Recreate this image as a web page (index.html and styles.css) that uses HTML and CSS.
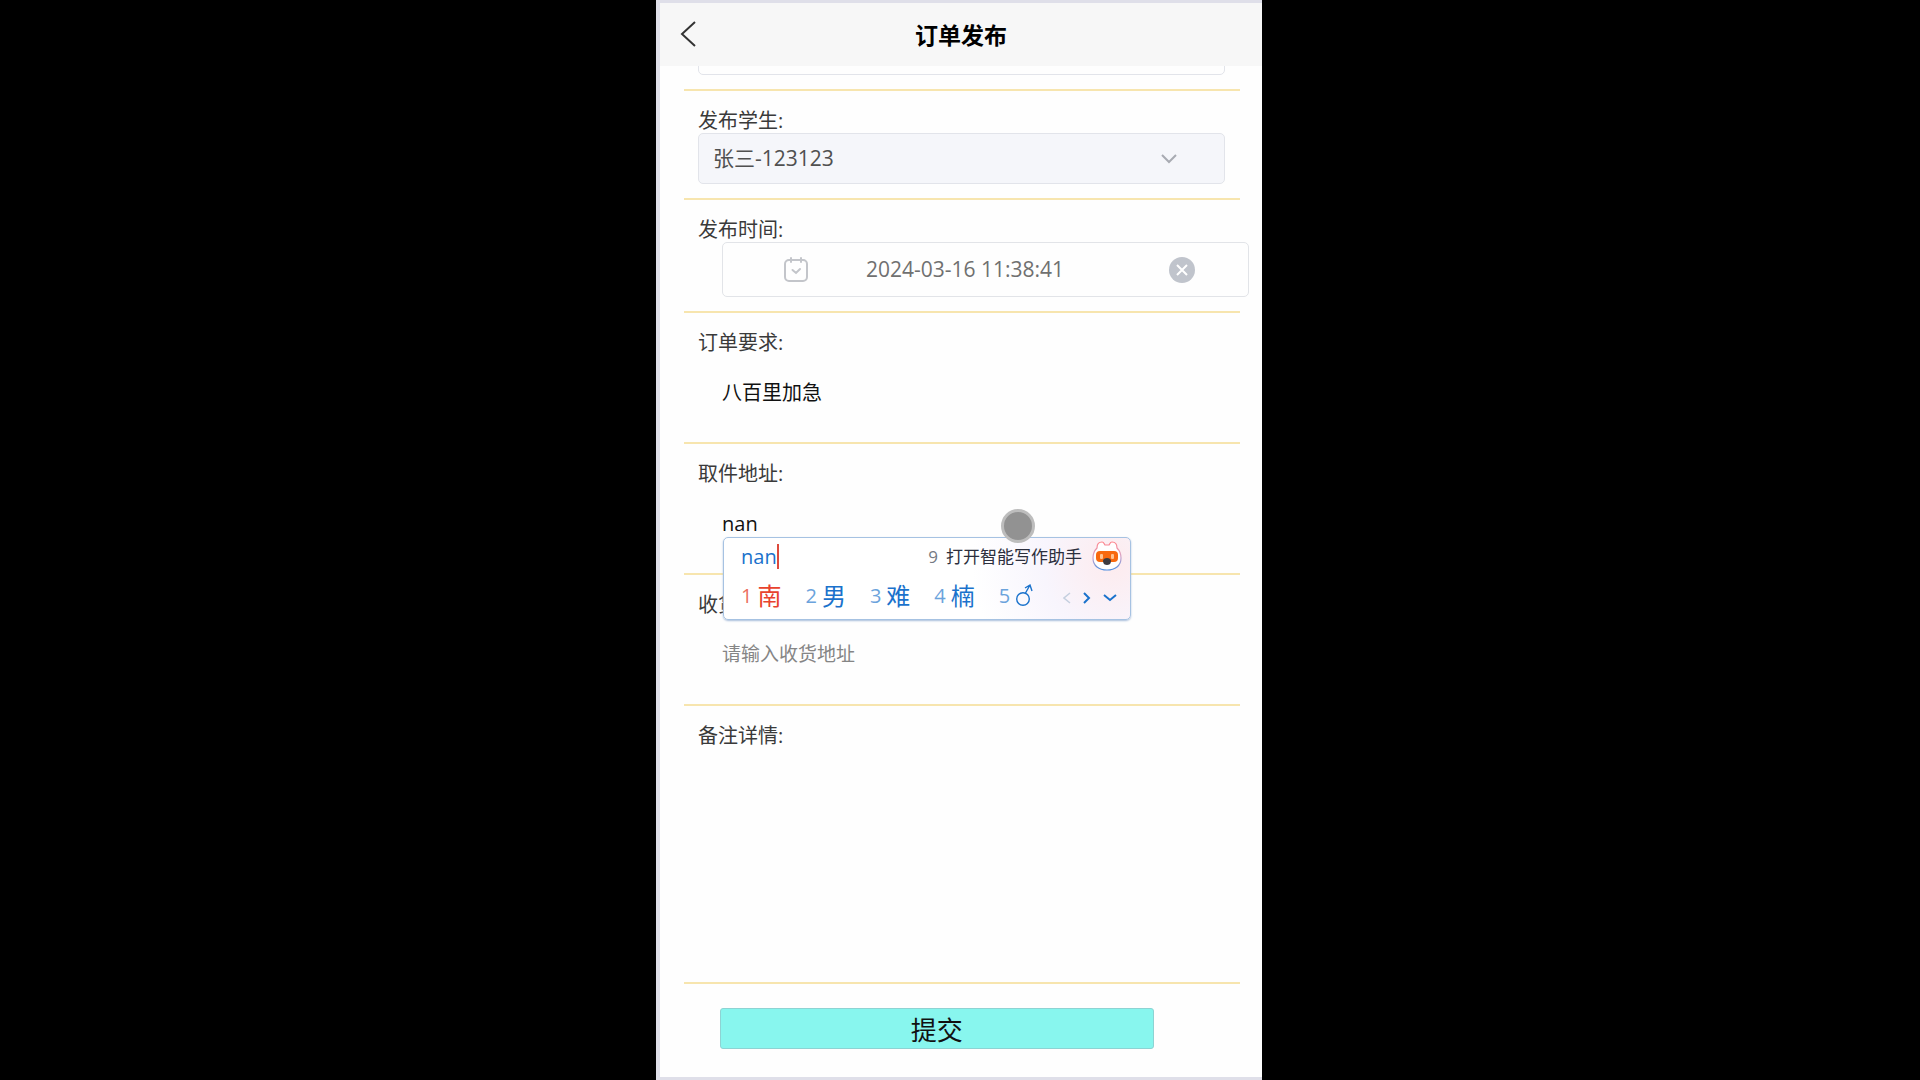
FILE: index.html
```html
<!DOCTYPE html>
<html lang="zh-CN">
<head>
<meta charset="utf-8">
<meta name="viewport" content="width=device-width, initial-scale=1">
<title>订单发布</title>
<link rel="stylesheet" href="styles.css">
</head>
<body>
<main class="phone">
  <header class="bar">
    <button class="back" type="button" aria-label="返回">
      <svg width="16" height="26" viewBox="0 0 16 26" fill="none" stroke="currentColor" stroke-width="2"><path d="M15 1 2 13l13 12"/></svg>
    </button>
    <h1 class="title">订单发布</h1>
  </header>
  <form class="form">
    <div class="row row-cut">
      <input class="box" type="text" aria-label="订单信息">
    </div>
    <div class="row">
      <label class="label" for="student">发布学生:</label>
      <div class="picker">
        <select class="box select" id="student"><option>张三-123123</option></select>
        <svg class="chevron" width="16" height="10" viewBox="0 0 16 10" fill="none" stroke="currentColor" stroke-width="2"><path d="m1 1 7 7 7-7"/></svg>
      </div>
    </div>
    <div class="row">
      <label class="label" for="time">发布时间:</label>
      <div class="date">
        <svg class="calendar" width="26" height="26" viewBox="0 0 26 26" fill="none" stroke="currentColor" stroke-width="2" stroke-linecap="round"><rect x="2" y="3" width="22" height="21" rx="4"/><path d="M8 1v4M18 1v4M9.500 13l3.500 3 4-4"/></svg>
        <input class="date-input" id="time" type="text" value="2024-03-16 11:38:41">
        <button class="clear" type="button" aria-label="清除">
          <svg width="28" height="28" viewBox="0 0 28 28"><circle cx="14" cy="14" r="13" fill="#c0c4cc"/><path d="m9 9 10 10M19 9 9 19" stroke="#fff" stroke-width="2"/></svg>
        </button>
      </div>
    </div>
    <div class="row">
      <label class="label" for="demand">订单要求:</label>
      <textarea class="area" id="demand">八百里加急</textarea>
    </div>
    <div class="row row-active">
      <label class="label" for="pickup">取件地址:</label>
      <textarea class="area" id="pickup">nan</textarea>
      <section class="ime" aria-label="输入法">
        <div class="ime-top">
          <span class="ime-code">nan</span>
          <span class="ime-tip"><span class="ime-nine">9</span>打开智能写作助手</span>
          <svg class="mascot" width="30" height="32" viewBox="0 0 30 32">
            <defs><linearGradient id="ring" x1="0" y1="0" x2="0" y2="1"><stop offset="0" stop-color="#ff7f86"/><stop offset=".5" stop-color="#d8a5c8"/><stop offset="1" stop-color="#4f8fe0"/></linearGradient></defs>
            <path d="M5 8C5 4 7 2 10 2c2 0 2 2 3 3h4c1-1 1-3 3-3 3 0 5 2 5 6 3 3 4 6 4 10 0 8-6 12-14 12S1 26 1 18c0-4 1-7 4-10Z" fill="#fff" stroke="url(#ring)" stroke-width="1.2"/>
            <rect x="4" y="11" width="22" height="11" rx="4" fill="#f8690f"/>
            <rect x="8" y="14" width="3" height="5" rx="1" fill="#ffc18e"/><rect x="19" y="14" width="3" height="5" rx="1" fill="#ffc18e"/>
            <path d="M11 21c0-2 2-3 4-3s4 1 4 3c0 3-2 4-4 4s-4-1-4-4Z" fill="#3c3b40"/>
          </svg>
        </div>
        <div class="ime-bottom">
          <ol class="words">
            <li class="word word-first"><span class="num">1</span>南</li>
            <li class="word"><span class="num">2</span>男</li>
            <li class="word"><span class="num">3</span>难</li>
            <li class="word"><span class="num">4</span>楠</li>
            <li class="word"><span class="num">5</span><svg width="20" height="24" viewBox="0 0 20 24" fill="none" stroke="currentColor" stroke-width="1.4" role="img" aria-label="♂"><circle cx="8" cy="16" r="6.3"/><path d="M10.500 10 15 2M10 5l5-3 2 6"/></svg></li>
          </ol>
          <div class="pager">
            <svg class="off" width="8" height="12" viewBox="0 0 8 12" fill="none" stroke="currentColor" stroke-width="1.5"><path d="M7 1 1 6l6 5"/></svg>
            <svg width="8" height="12" viewBox="0 0 8 12" fill="none" stroke="currentColor" stroke-width="2"><path d="m1 1 5 5-5 5"/></svg>
            <svg width="14" height="8" viewBox="0 0 14 8" fill="none" stroke="currentColor" stroke-width="2"><path d="m1 1 6 5 6-5"/></svg>
          </div>
        </div>
      </section>
      <span class="touch"></span>
    </div>
    <div class="row">
      <label class="label" for="address">收货地址:</label>
      <textarea class="area" id="address" placeholder="请输入收货地址"></textarea>
    </div>
    <div class="row">
      <label class="label" for="note">备注详情:</label>
      <textarea class="area area-tall" id="note"></textarea>
    </div>
    <button class="submit" type="button">提交</button>
  </form>
</main>
</body>
</html>
```
FILE: styles.css
```css
* {
  box-sizing: border-box;
}

body {
  margin: 0;
  padding-right: 2px;
  background: #000;
  color: #3a3a3a;
  font: 20px/27px "Open Sans", "Noto Sans CJK SC", sans-serif;
}

button,
input,
select,
textarea {
  margin: 0;
  padding: 0;
  border: 0;
  background: none;
  color: inherit;
  font: inherit;
  outline: 0;
}

svg {
  display: block;
  flex: none;
}

.phone {
  display: flex;
  flex-direction: column;
  max-width: 606px;
  min-height: 100vh;
  margin: 0 auto;
  border: solid #dfdfe9;
  border-width: 3px 0 3px 4px;
  background: #fefefe;
}

.bar {
  display: grid;
  grid-template-columns: 60px 1fr 60px;
  align-items: center;
  height: 63px;
  background: #f7f7f7;
}

.back {
  padding: 0 0 2px 20px;
  color: #333;
}

.title {
  margin: 0;
  color: #000;
  font-size: 23px;
  line-height: 32px;
  font-weight: 700;
  text-align: center;
}

.form {
  padding: 0 22px 0 24px;
}

.row {
  position: relative;
  padding: 17px 15px 14px 14px;
  border-bottom: 2px solid #f7e5ae;
}

.row-cut {
  display: flex;
  align-items: flex-end;
  height: 25px;
  padding-top: 0;
  overflow: hidden;
}

.row-active {
  z-index: 1;
}

.label {
  display: block;
  line-height: 25px;
}

.box {
  display: block;
  width: 100%;
  height: 51px;
  padding: 0 14px;
  border: 1px solid #e2e4ea;
  border-radius: 5px;
  font-size: 21px;
}

.picker {
  display: grid;
  align-items: center;
}

.select {
  grid-area: 1 / 1;
  appearance: none;
  background: #f5f6fa;
  color: #505050;
}

.chevron {
  grid-area: 1 / 1;
  justify-self: end;
  margin-right: 48px;
  color: #a8abb2;
  pointer-events: none;
}

.date {
  display: flex;
  align-items: center;
  height: 55px;
  margin: 0 -24px 0 24px;
  padding: 0 52px 0 60px;
  border: 1px solid #e2e4e8;
  border-radius: 5px;
}

.calendar {
  color: #c3c5ca;
}

.date-input {
  flex: 1;
  min-width: 0;
  margin-left: 57px;
  color: #707070;
  font-size: 21px;
}

.area {
  display: block;
  width: 100%;
  height: 73px;
  padding: 24px 24px 0;
  color: #111;
  resize: none;
  overflow: hidden;
}

.area::placeholder {
  color: #858585;
  font-size: 19px;
}

.area-tall {
  height: 220px;
}

.ime {
  position: absolute;
  top: 93px;
  left: 39px;
  display: flex;
  flex-direction: column;
  gap: 4px;
  width: 408px;
  height: 83px;
  padding: 2px 8px 0 17px;
  border: 1px solid #a6c2e2;
  border-radius: 5px;
  background: radial-gradient(circle at 96% 30%, #fdebee, #f8f5fd 18%, #fff 36%);
  box-shadow: 0 1px 2px #a9bedb;
  color: #1a72cc;
}

.ime-top,
.ime-bottom {
  display: flex;
  align-items: center;
  justify-content: space-between;
  height: 32px;
}

.ime-code {
  margin-right: auto;
  border-right: 2px solid #dd4a3c;
  line-height: 25px;
}

.ime-tip {
  margin-right: 10px;
  color: #2c2f3d;
  font-size: 17px;
}

.ime-nine {
  margin-right: 8px;
  color: #747a84;
}

.ime-bottom {
  height: 38px;
}

.words {
  display: flex;
  gap: 24px;
  margin: 0;
  padding: 0;
  list-style: none;
}

.word {
  display: flex;
  align-items: center;
  gap: 5px;
  font-size: 24px;
}

.num {
  color: #6ba3dc;
  font-size: 20px;
}

.word-first {
  color: #e8432e;
}

.word-first .num {
  color: #ec6f5f;
}

.pager {
  display: flex;
  align-items: center;
  gap: 12px;
  padding: 6px 5px 0 0;
}

.off {
  color: #c5cfdf;
}

.touch {
  position: absolute;
  top: 65px;
  left: 317px;
  width: 34px;
  height: 34px;
  border: 3px solid #bdbdbd;
  border-radius: 50%;
  background: #929292;
}

.submit {
  display: block;
  width: 78%;
  height: 41px;
  margin: 24px 0 28px 36px;
  padding-top: 3px;
  border: 1px solid #8ed3d3;
  border-radius: 3px;
  background: #88f6ee;
  color: #111;
  font-size: 26px;
  line-height: 36px;
}
```
